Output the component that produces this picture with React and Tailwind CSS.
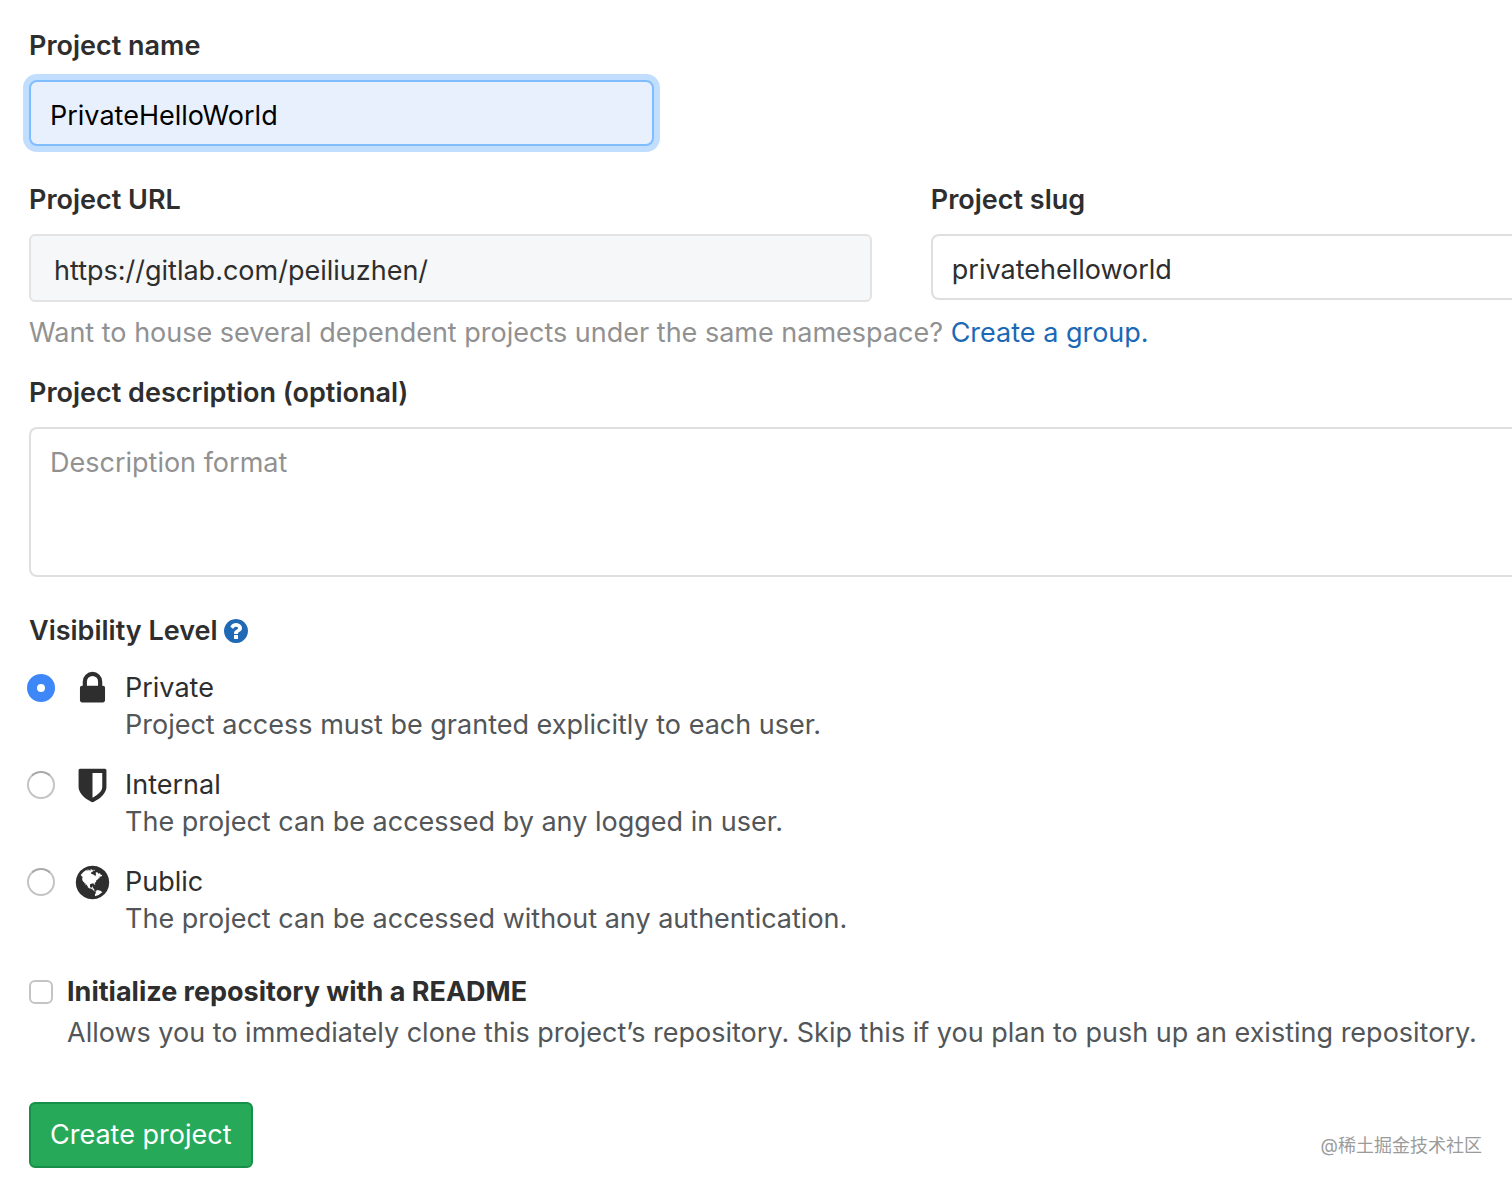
import { useState } from "react";

const icons = {
  lock: "M640 768h512v-192q0-106-75-181t-181-75-181 75-75 181v192zm832 96v576q0 40-28 68t-68 28h-960q-40 0-68-28t-28-68v-576q0-40 28-68t68-28h32v-192q0-184 132-316t316-132 316 132 132 316v192h32q40 0 68 28t28 68z",
  shield: "M1344 960v-640h-448v1137q119-63 213-137 235-184 235-360zm192-768v768q0 86-33.5 170.5t-83 150-118 127.5-126.5 103-121 77.5-89.5 49.5-42.5 20q-12 6-26 6t-26-6q-16-7-42.5-20t-89.5-49.5-121-77.5-126.5-103-118-127.5-83-150-33.5-170.5v-768q0-26 19-45t45-19h1152q26 0 45 19t19 45z",
  globe: "M896 128q209 0 385.5 103t279.5 279.5 103 385.5-103 385.5-279.5 279.5-385.5 103-385.5-103-279.5-279.5-103-385.5 103-385.5 279.5-279.5 385.5-103zm274 521q-2 1-9.5 9.5t-13.5 9.5q2 0 4.5-5t5-11 3.5-7q6-7 22-15 14-6 52-12 34-8 51 11-2-2 9.5-13t14.5-12q3-2 15-4.5t15-7.5l2-22q-12 1-17.5-7t-6.5-21q0 2-6 8 0-7-4.5-8t-11.5 1-9 1q-10-3-15-7.5t-8-16.5-4-15q-2-5-9.5-11t-9.5-10q-1-2-2.5-5.5t-3-6.5-4-5.5-5.5-2.5-7 5-7.5 10-4.5 5q-3-2-6-1.5t-4.5 1-4.5 3-5 3.5q-3 2-8.5 3t-8.5 2q15-5-1-11-10-4-16-3 9-4 7.5-12t-8.5-14h5q-1-4-8.5-8.5t-17.5-8.5-13-6q-8-5-34-9.5t-33-.5q-5 6-4.5 10.5t4 14 3.5 12.5q1 6-5.5 13t-6.5 12q0 7 14 15.5t10 21.5q-3 8-16 16t-16 12q-5 8-1.5 18.5t10.5 16.5q2 2 1.5 4t-3.5 4.5-5.5 4-6.5 3.5l-3 2q-11 5-20.5-6t-13.5-26q-7-25-16-30-23-8-29 1-5-13-41-26-25-9-58-4 6-1 0-15-7-15-19-12 3-6 4-17.5t1-13.5q3-13 12-23 1-1 7-8.5t9.5-13.5.5-6q35 4 50-11 5-5 11.5-17t10.5-17q9-6 14-5.5t14.5 5.5 14.5 5q14 1 15.5-11t-7.5-20q12 1 3-17-4-7-8-9-12-4-27 5-8 4 2 8-1-1-9.5 10.5t-16.5 17.5-16-5q-1-1-5.5-13.5t-9.5-13.5q-8 0-16 15 3-8-11-15t-24-8q19-12-8-27-7-4-20.5-5t-19.5 4q-5 7-5.5 11.5t5 8 10.5 5.5 11.5 4 8.5 3q14 10 8 14-2 1-8.5 3.5t-11.5 4.5-6 4q-3 4 0 14t-2 14q-5-5-9-17.5t-7-16.5q7 9-25 6l-10-1q-4 0-16 2t-20.5 1-13.5-8q-4-8 0-20 1-4 4-2-4-3-11-9.5t-10-8.5q-46 15-94 41 6 1 12-1 5-2 13-6.5t10-5.5q34-14 42-7l5-5q14 16 20 25-7-4-30-1-20 6-22 12 7 12 5 18-4-3-11.5-10t-14.5-11-15-5q-16 0-22 1-146 80-235 222 7 7 12 8 4 1 5 9t2.5 11 11.5-3q9 8 3 19 1-1 44 27 19 17 21 21 3 11-10 18-1-2-9-9t-9-4q-3 5 .5 18.5t10.5 12.5q-7 0-9.5 16t-2.5 35.5-1 23.5l2 1q-3 12 5.5 34.5t21.5 19.5q-13 3 20 43 6 8 8 9 3 2 12 7.5t15 10 10 10.5q4 5 10 22.5t14 23.5q-2 6 9.5 20t10.5 23q-1 0-2.5 1t-2.5 1q3 7 15.5 14t15.5 13q1 3 2 10t3 11 8 2q2-20-24-62-15-25-17-29-3-5-5.5-15.5t-4.5-14.5q2 0 6 1.5t8.5 3.5 7.5 4 2 3q-3 7 2 17.5t12 18.5 17 19 12 13q6 6 14 19.5t0 13.5q9 0 20 10.5t17 19.5q5 8 8 26t5 24q2 7 8.5 13.5t12.5 9.5l16 8 13 7q5 2 18.5 10.5t21.5 11.5q10 4 16 4t14.5-2.5 13.5-3.5q15-2 29 15t21 21q36 19 55 11-2 1 .5 7.5t8 15.5 9 14.5 5.5 8.5q5 6 18 15t18 15q6-4 7-9-3 8 7 20t18 10q14-3 14-32-31 15-49-18 0-1-2.5-5.5t-4-8.5-2.5-8.5 0-7.5 5-3q9 0 10-3.5t-2-12.5-4-13q-1-8-11-20t-12-15q-5 9-16 8t-16-9q0 1-1.5 5.5t-1.5 6.5q-13 0-15-1 1-3 2.5-17.5t3.5-22.5q1-4 5.5-12t7.5-14.5 4-12.5-4.5-9.5-17.5-2.5q-19 1-26 20-1 3-3 10.5t-5 11.5-9 7q-7 3-24 2t-24-5q-13-8-22.5-29t-9.5-37q0-10 2.5-26.5t3-25-5.5-24.5q3-2 9-9.5t10-10.5q2-1 4.5-1.5t4.5 0 4-1.5 3-6q-1-1-4-3-3-3-4-3 7 3 28.5-1.5t27.5 1.5q15 11 22-2 0-1-2.5-9.5t-.5-13.5q5 27 29 9 3 3 15.5 5t17.5 5q3 2 7 5.5t5.5 4.5 5-.5 8.5-6.5q10 14 12 24 11 40 19 44 7 3 11 2t4.5-9.5 0-14-1.5-12.5l-1-8v-18l-1-8q-15-3-18.5-12t1.5-18.5 15-18.5q1-1 8-3.5t15.5-6.5 12.5-8q21-19 15-35 7 0 11-9-1 0-5-3t-7.5-5-4.5-2q9-5 2-16 5-3 7.5-11t7.5-10q9 12 21 2 7-8 1-16 5-7 20.5-10.5t18.5-9.5q7 2 8-2t1-12 3-12q4-5 15-9t13-5l17-11q3-4 0-4 18 2 31-11 10-11-6-20 3-6-3-9.5t-15-5.5q3-1 11.5-.5t10.5-1.5q15-10-7-16-17-5-43 12zm-163 877q206-36 351-189-3-3-12.5-4.5t-12.5-3.5q-18-7-24-8 1-7-2.5-13t-8-9-12.5-8-11-7q-2-2-7-6t-7-5.5-7.5-4.5-8.5-2-10 1l-3 1q-3 1-5.5 2.5t-5.5 3-4 3 0 2.5q-21-17-36-22-5-1-11-5.5t-10.5-7-10-1.5-11.5 7q-5 5-6 15t-2 13q-7-5 0-17.5t2-18.5q-3-6-10.5-4.5t-12 4.5-11.5 8.5-9 6.5-8.5 5.5-8.5 7.5q-3 4-6 12t-5 11q-2-4-11.5-6.5t-9.5-5.5q2 10 4 35t5 38q7 31-12 48-27 25-29 40-4 22 12 26 0 7-8 20.5t-7 21.5q0 6 2 16z",
  question: "M1024 1376v-192q0-14-9-23t-23-9h-192q-14 0-23 9t-9 23v192q0 14 9 23t23 9h192q14 0 23-9t9-23zm256-672q0-88-55.5-163t-138.5-116-170-41q-243 0-371 213-15 24 8 42l132 100q7 6 19 6 16 0 25-12 53-68 86-92 34-24 86-24 48 0 85.5 26t37.5 59q0 38-20 61t-68 45q-63 28-115.5 86.5t-52.5 125.5v36q0 14 9 23t23 9h192q14 0 23-9t9-23q0-19 21.5-49.5t54.5-49.5q32-18 49-28.5t46-35 44.5-48 28-60.5 12.5-81zm384 192q0 209-103 385.5t-279.5 279.5-385.5 103-385.5-103-279.5-279.5-103-385.5 103-385.5 279.5-279.5 385.5-103 385.5 103 279.5 279.5 103 385.5z",
};

const levels = [
  { id: "private", name: "Private", icon: "lock", help: "Project access must be granted explicitly to each user." },
  { id: "internal", name: "Internal", icon: "shield", help: "The project can be accessed by any logged in user." },
  { id: "public", name: "Public", icon: "globe", help: "The project can be accessed without any authentication." },
];

function Icon({ name, className }) {
  return (
    <svg viewBox="0 0 1792 1792" fill="currentColor" aria-hidden="true" className={className}>
      <path d={icons[name]} />
    </svg>
  );
}

function Label({ htmlFor, children }) {
  return (
    <label htmlFor={htmlFor} className="block mb-[18px] font-semibold">
      {children}
    </label>
  );
}

export default function App() {
  const [name, setName] = useState("PrivateHelloWorld");
  const [slug, setSlug] = useState("privatehelloworld");
  const [level, setLevel] = useState("private");
  const [readme, setReadme] = useState(false);

  return (
    <form
      onSubmit={(e) => e.preventDefault()}
      className="relative min-h-screen bg-white pl-[29px] pt-[30px] pb-4 font-['Inter','Noto_Sans_CJK_SC',sans-serif] text-[27px] leading-8 text-[#2e2e2e]"
    >
      <Label htmlFor="name">Project name</Label>
      <input
        id="name"
        type="text"
        value={name}
        onChange={(e) => setName(e.target.value)}
        className="block w-[625px] max-w-full h-[66px] px-[19px] pt-1 rounded-lg border-2 border-[#80bdff] bg-[#e8f0fe] text-black outline-none ring-6 ring-[#c2deff]"
      />

      <div className="mt-[38px] grid grid-cols-[29fr_20fr] gap-[59px] items-start">
        <div>
          <Label htmlFor="url">Project URL</Label>
          <input
            id="url"
            type="text"
            readOnly
            value="https://gitlab.com/peiliuzhen/"
            className="block w-full h-[68px] px-[23px] pt-1 rounded-md border-2 border-[#e3e3e3] bg-[#f6f7f9] outline-none"
          />
        </div>
        <div>
          <Label htmlFor="slug">Project slug</Label>
          <input
            id="slug"
            type="text"
            value={slug}
            onChange={(e) => setSlug(e.target.value)}
            className="block w-full h-[66px] px-[19px] pt-1 rounded-l-lg border-2 border-r-0 border-[#dfdfdf] bg-white outline-none"
          />
        </div>
      </div>
      <p className="mt-[15px] mb-7 text-[#919191]">
        Want to house several dependent projects under the same namespace?{" "}
        <a href="#" className="text-[#1b69b6]">Create a group.</a>
      </p>

      <Label htmlFor="description">Project description (optional)</Label>
      <textarea
        id="description"
        placeholder="Description format"
        className="block w-full h-[150px] px-[19px] py-[18px] rounded-l-lg border-2 border-r-0 border-[#dfdfdf] bg-white resize-none outline-none placeholder:text-[#919191]"
      />

      <fieldset className="mt-[38px]">
        <legend className="flex items-center gap-1 font-semibold">
          Visibility Level
          <a href="#" aria-label="Visibility help" className="text-[#1f69b5]">
            <Icon name="question" className="size-7" />
          </a>
        </legend>
        <div className="mt-[25px] -ml-0.5 flex flex-col gap-7">
          {levels.map((item) => (
            <div key={item.id} className="grid grid-cols-[28px_39px_1fr] gap-x-[18px] gap-y-[5px]">
              <input
                id={item.id}
                type="radio"
                name="visibility"
                checked={level === item.id}
                onChange={() => setLevel(item.id)}
                className="appearance-none self-center size-7 rounded-full border-2 border-[#c4c4c4] border-t-[#a9a9a9] bg-white checked:border-[10px] checked:border-[#3d87f8]"
              />
              <Icon name={item.icon} className="size-[39px] -my-1 self-center" />
              <label htmlFor={item.id} className="-ml-[5px]">{item.name}</label>
              <p className="col-start-3 -ml-[5px] text-[#525658]">{item.help}</p>
            </div>
          ))}
        </div>
      </fieldset>

      <div className="mt-[41px] grid grid-cols-[24px_1fr] gap-x-[14px] gap-y-[9px]">
        <input
          id="readme"
          type="checkbox"
          checked={readme}
          onChange={(e) => setReadme(e.target.checked)}
          className="appearance-none self-center size-6 rounded-md border-2 border-[#c4c4c4] bg-white checked:bg-[#3d87f8]"
        />
        <label htmlFor="readme" className="font-bold">Initialize repository with a README</label>
        <p className="col-start-2 text-[#525658]">
          Allows you to immediately clone this project’s repository. Skip this if you plan to push up an existing repository.
        </p>
      </div>

      <button
        type="submit"
        className="mt-[53px] h-[66px] px-[19px] rounded-md border-2 border-[#168f48] bg-[#26a958] text-white"
      >
        Create project
      </button>

      <span className="absolute right-[30px] bottom-6 text-lg leading-8 text-[#9b9b9b]">@稀土掘金技术社区</span>
    </form>
  );
}
